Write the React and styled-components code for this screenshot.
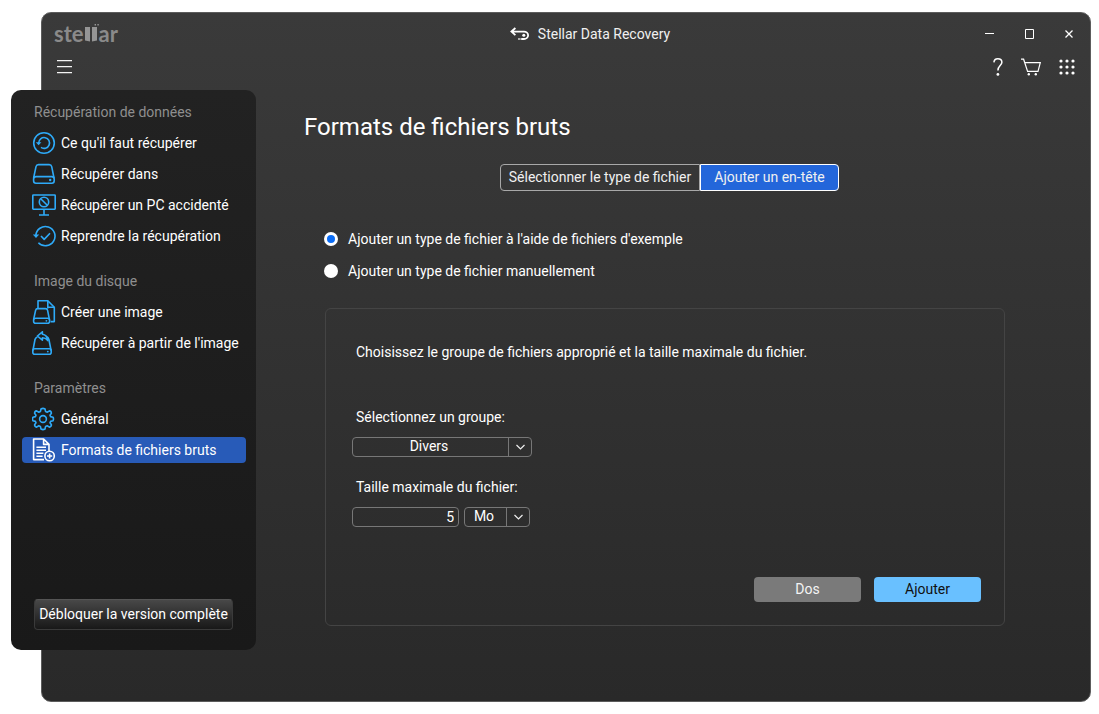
import React, { useState } from "react";
import styled, { createGlobalStyle, css } from "styled-components";

const GlobalStyle = createGlobalStyle`
  *, *::before, *::after {
    box-sizing: border-box;
  }

  body {
    margin: 0;
    background: #ffffff;
    color: #ffffff;
    font-family: Roboto, "Liberation Sans", sans-serif;
    font-size: 14px;
    line-height: 20px;
  }

  button, input, select {
    font: inherit;
    color: inherit;
  }
`;

/* icons */

const RecoverIcon = () => (
  <Icon viewBox="0 0 24 24">
    <circle cx="12" cy="12" r="10.3" />
    <path d="M6.7 12A5.4 5.4 0 1 1 9 16.4" />
    <path className="solid" d="M3.8 11.2H9.4L6.6 14.2z" />
  </Icon>
);

const DriveIcon = () => (
  <Icon viewBox="0 0 24 24">
    <path d="M1.6 16 4 4.6Q4.5 2.6 6.5 2.6H17.2Q19.2 2.6 19.7 4.6L22 16" />
    <rect x="1.6" y="14.6" width="20.6" height="6.6" rx="2.4" />
    <circle className="solid" cx="18.2" cy="18" r="1.2" />
  </Icon>
);

const CrashedPcIcon = () => (
  <Icon viewBox="0 0 24 24">
    <rect x="0.8" y="2" width="22.4" height="14.2" rx="0.6" />
    <path d="M12 16.2V22M7 22H17" />
    <circle cx="12" cy="9" r="4.7" />
    <path d="M8.7 5.8 15.3 12.3" />
  </Icon>
);

const ResumeIcon = () => (
  <Icon viewBox="0 0 24 24">
    <path d="M3.8 11.6A9.6 9.6 0 1 1 6.4 18.7" />
    <path d="M9 12 12.2 15.4 18 9.3" />
    <path className="solid" d="M0.8 10.6H7.2L4 14z" />
  </Icon>
);

const CreateImageIcon = () => (
  <Icon viewBox="0 0 24 24">
    <path d="M6 8.5V0.8H15.8L22.3 7.2V21.6H18.6" />
    <path d="M15.8 0.8V8.5M15.8 7.2H22.3" />
    <path d="M1.6 19.5 3.6 10.4Q4 8.6 5.8 8.6H13.4Q15.2 8.6 15.6 10.4L17.4 19.5" />
    <rect x="1.6" y="18.2" width="16" height="5" rx="2" />
    <circle className="solid" cx="14.4" cy="20.8" r="0.9" />
  </Icon>
);

const FromImageIcon = () => (
  <Icon viewBox="0 0 24 24">
    <path d="M0.9 19.5 3 8.5Q3.4 6.6 5.4 6M14.4 5.6Q16.4 6 16.9 8.5L19.1 19.5" />
    <rect x="0.8" y="17.8" width="18.4" height="5.4" rx="2" />
    <circle className="solid" cx="15.8" cy="20.6" r="0.9" />
    <path d="M5.4 5 10.4 0.8V3.2Q15.2 3.8 15.8 9.6 13.6 6.8 10.4 6.8V9.2z" />
  </Icon>
);

const GearIcon = () => (
  <Icon viewBox="0 0 24 24">
    <circle cx="11" cy="12" r="3.4" />
    <path d="M9 2Q11 .8 13 2L13.6 4.6 15.2 5.2 17.4 3.9Q19.4 4.2 19.4 6.2L18 8.2 18.6 9.6 21 10.2Q22 12 21 13.8L18.6 14.4 18 15.8 19.4 17.8Q19.4 19.8 17.4 20.1L15.2 18.8 13.6 19.4 13 22Q11 23.2 9 22L8.4 19.4 6.8 18.8 4.6 20.1Q2.6 19.8 2.6 17.8L4 15.8 3.4 14.4 1 13.8Q0 12 1 10.2L3.4 9.6 4 8.2 2.6 6.2Q2.6 4.2 4.6 3.9L6.8 5.2 8.4 4.6z" />
  </Icon>
);

const RawFormatsIcon = () => (
  <Icon viewBox="0 0 24 24">
    <path d="M12 21.6H1.6V1H11.6L17 6.4V13M11.6 1V6.4H17" />
    <path d="M4.4 9.2H14M4.4 12.2H14M4.4 15.2H11.4M4.4 18.2H10.6" />
    <circle cx="17.6" cy="18" r="4.7" />
    <path d="M17.6 15.4V20.6M15 18H20.2" />
  </Icon>
);

const MENU = [
  {
    title: "Récupération de données",
    items: [
      { label: "Ce qu'il faut récupérer", icon: RecoverIcon },
      { label: "Récupérer dans", icon: DriveIcon },
      { label: "Récupérer un PC accidenté", icon: CrashedPcIcon },
      { label: "Reprendre la récupération", icon: ResumeIcon },
    ],
  },
  {
    title: "Image du disque",
    items: [
      { label: "Créer une image", icon: CreateImageIcon },
      { label: "Récupérer à partir de l'image", icon: FromImageIcon },
    ],
  },
  {
    title: "Paramètres",
    items: [
      { label: "Général", icon: GearIcon },
      { label: "Formats de fichiers bruts", icon: RawFormatsIcon },
    ],
  },
];

const Logo = () => (
  <LogoText>
    ste
    <svg width="15" height="20" viewBox="0 0 15 20" aria-label="ll">
      <path d="M1 3H6V17.6L1 16.4z" />
      <path d="M8 3H13V16.4L8 17.6z" />
      <path d="M10.6 0H12v1.4h-1.4zM13.4 0h1.4v1.4h-1.4z" />
    </svg>
    ar
  </LogoText>
);

const TitleBar = () => (
  <TitleRow>
    <Logo />
    <AppTitle>
      <svg width="20" height="14" viewBox="0 0 20 14" fill="none" stroke="#fff" strokeWidth="1.8">
        <path d="M5.4 1 1.4 4.6 5.4 8.2M1.6 4.6H14a4 3.6 0 0 1 0 7.4h-2" />
        <circle cx="13.8" cy="8.2" r="1.5" fill="#fff" stroke="none" />
        <path d="M8.4 12H12" strokeDasharray="1.2 1" />
      </svg>
      Stellar Data Recovery
    </AppTitle>
    <WindowButtons>
      <IconButton aria-label="Réduire">
        <svg width="9" height="10" stroke="#fff">
          <path d="M0 4.5H9" />
        </svg>
      </IconButton>
      <IconButton aria-label="Agrandir">
        <svg width="9" height="10" stroke="#fff" fill="none">
          <path d="M.5.5H8.5V9.5H.5z" />
        </svg>
      </IconButton>
      <IconButton aria-label="Fermer">
        <svg width="8" height="8" stroke="#fff" strokeWidth="1.3">
          <path d="M.5.5 7.5 7.5M7.5.5.5 7.5" />
        </svg>
      </IconButton>
    </WindowButtons>
  </TitleRow>
);

const Toolbar = () => (
  <ToolRow>
    <IconButton aria-label="Menu">
      <svg width="15" height="14" stroke="#f4f4f4" strokeWidth="1.3">
        <path d="M0 .6H15M0 6.6H15M0 12.6H15" />
      </svg>
    </IconButton>
    <Tools>
      <IconButton aria-label="Aide">
        <svg width="10" height="18" viewBox="0 0 10 18" fill="none" stroke="#fff" strokeWidth="1.5">
          <path d="M.9 4.4Q1.2.8 4.8.8 8.9.8 8.9 4.3C8.9 7.4 4.9 8 4.9 12.4" />
          <circle cx="4.9" cy="16.4" r="1.4" fill="#fff" stroke="none" />
        </svg>
      </IconButton>
      <IconButton aria-label="Panier">
        <svg width="20" height="18" viewBox="0 0 20 18" fill="none" stroke="#fff" strokeWidth="1.2">
          <path d="M0 1.2H2.6L6.6 13.4H17L19.3 4.6H3.8" />
          <circle cx="7.8" cy="16.2" r="1.2" fill="#fff" stroke="none" />
          <circle cx="14.8" cy="16.2" r="1.2" fill="#fff" stroke="none" />
        </svg>
      </IconButton>
      <IconButton aria-label="Applications">
        <svg width="16" height="16" viewBox="0 0 16 16" fill="#fff">
          {[2, 8, 14].map((y) =>
            [2, 8, 14].map((x) => <circle key={`${x}-${y}`} cx={x} cy={y} r="1.6" />)
          )}
        </svg>
      </IconButton>
    </Tools>
  </ToolRow>
);

const Sidebar = ({ current, onSelect }) => (
  <SidePanel>
    {MENU.map((group) => (
      <MenuGroup key={group.title}>
        <MenuTitle>{group.title}</MenuTitle>
        {group.items.map(({ label, icon: ItemIcon }) => (
          <MenuItem key={label} $active={label === current} onClick={() => onSelect(label)}>
            <ItemIcon />
            {label}
          </MenuItem>
        ))}
      </MenuGroup>
    ))}
    <UnlockButton>Débloquer la version complète</UnlockButton>
  </SidePanel>
);

const Dropdown = ({ id, width, options, label }) => (
  <SelectBox $width={width}>
    <select id={id} aria-label={label}>
      {options.map((option) => (
        <option key={option}>{option}</option>
      ))}
    </select>
    <SelectArrow>
      <svg width="9" height="6" fill="none" stroke="#eee" strokeWidth="1.2">
        <path d="M.5 1 4.5 5 8.5 1" />
      </svg>
    </SelectArrow>
  </SelectBox>
);

const RawFormats = () => {
  const [tab, setTab] = useState("header");
  const [mode, setMode] = useState("sample");
  const [size, setSize] = useState("5");

  return (
    <Main>
      <Title>Formats de fichiers bruts</Title>

      <Tabs>
        <Tab $active={tab === "type"} onClick={() => setTab("type")}>
          Sélectionner le type de fichier
        </Tab>
        <Tab $active={tab === "header"} onClick={() => setTab("header")}>
          Ajouter un en-tête
        </Tab>
      </Tabs>

      <Choices>
        <Choice>
          <input
            type="radio"
            name="mode"
            checked={mode === "sample"}
            onChange={() => setMode("sample")}
          />
          Ajouter un type de fichier à l'aide de fichiers d'exemple
        </Choice>
        <Choice>
          <input
            type="radio"
            name="mode"
            checked={mode === "manual"}
            onChange={() => setMode("manual")}
          />
          Ajouter un type de fichier manuellement
        </Choice>
      </Choices>

      <Panel>
        <Intro>Choisissez le groupe de fichiers approprié et la taille maximale du fichier.</Intro>

        <Field>
          <label htmlFor="group">Sélectionnez un groupe:</label>
          <Controls>
            <Dropdown id="group" width={180} options={["Divers"]} />
          </Controls>
        </Field>

        <Field>
          <label htmlFor="size">Taille maximale du fichier:</label>
          <Controls>
            <SizeInput id="size" value={size} onChange={(e) => setSize(e.target.value)} />
            <Dropdown id="unit" label="Unité" width={66} options={["Mo"]} />
          </Controls>
        </Field>

        <Actions>
          <ActionButton>Dos</ActionButton>
          <ActionButton $primary>Ajouter</ActionButton>
        </Actions>
      </Panel>
    </Main>
  );
};

const App = () => {
  const [page, setPage] = useState("Formats de fichiers bruts");

  return (
    <>
      <GlobalStyle />
      <Page>
        <Window>
          <TitleBar />
          <Toolbar />
          <Body>
            <Sidebar current={page} onSelect={setPage} />
            <RawFormats />
          </Body>
        </Window>
      </Page>
    </>
  );
};

export default App;

const Page = styled.div`
  display: flex;
  min-height: 100vh;
  padding: 12px 8px 12px 41px;
`;

const Window = styled.div`
  flex: 1;
  display: flex;
  flex-direction: column;
  min-width: 0;
  border: 1px solid #5c5c5c;
  border-radius: 10px;
  background: linear-gradient(#3a3a3a, #292929);
`;

const TitleRow = styled.header`
  display: grid;
  grid-template-columns: 1fr auto 1fr;
  align-items: center;
  height: 42px;
  padding: 0 17px 0 12px;
`;

const LogoText = styled.div`
  display: flex;
  align-items: center;
  color: #8a8a8a;
  font-family: Lato, sans-serif;
  font-size: 22px;
  font-weight: 700;

  svg {
    fill: #959595;
  }
`;

const AppTitle = styled.div`
  display: flex;
  align-items: center;
  gap: 8px;
  padding-left: 53px;
  color: #f0f0f0;
`;

const WindowButtons = styled.div`
  display: flex;
  align-items: center;
  justify-content: flex-end;
  gap: 31px;
`;

const IconButton = styled.button`
  display: flex;
  padding: 0;
  border: 0;
  background: none;
  cursor: pointer;
`;

const ToolRow = styled.nav`
  display: flex;
  align-items: center;
  justify-content: space-between;
  height: 24px;
  padding: 0 15px 0 15px;
`;

const Tools = styled.div`
  display: flex;
  align-items: center;
  gap: 18px;
`;

const Body = styled.div`
  flex: 1;
  display: flex;
`;

const SidePanel = styled.aside`
  display: flex;
  flex-direction: column;
  flex: none;
  gap: 19px;
  width: 245px;
  margin: 11px 0 51px -31px;
  padding: 9px 10px 20px 11px;
  border-radius: 10px;
  background: linear-gradient(#222222, #191919);
`;

const MenuGroup = styled.div`
  display: flex;
  flex-direction: column;
  gap: 5px;
`;

const MenuTitle = styled.div`
  padding-left: 12px;
  color: #8f8f8f;
  line-height: 26px;
`;

const MenuItem = styled.button`
  display: flex;
  align-items: center;
  gap: 5px;
  height: 26px;
  padding: 0 0 0 10px;
  border: 0;
  border-radius: 4px;
  background: ${({ $active }) => ($active ? "#285bb8" : "none")};
  color: #ffffff;
  white-space: nowrap;
  cursor: pointer;

  svg {
    stroke: ${({ $active }) => ($active ? "#ffffff" : "#2eaaf8")};
  }
`;

const Icon = styled.svg`
  flex: none;
  width: 24px;
  height: 24px;
  fill: none;
  stroke-width: 1.6;
  stroke-linejoin: round;

  .solid {
    fill: #2eaaf8;
    stroke: none;
  }
`;

const UnlockButton = styled.button`
  height: 31px;
  margin: auto 13px 0 12px;
  padding: 0 0 2px;
  border: 1px solid #3a3a3a;
  border-top-color: #555555;
  border-radius: 4px;
  background: linear-gradient(#484848, #181818);
  white-space: nowrap;
  cursor: pointer;
`;

const Main = styled.main`
  flex: 1;
  min-width: 0;
  padding: 32px 55px 32px 48px;
`;

const Title = styled.h1`
  margin: 0;
  font-size: 24px;
  font-weight: 400;
  line-height: 32px;
`;

const Tabs = styled.div`
  display: flex;
  justify-content: center;
  margin-top: 21px;
`;

const Tab = styled.button`
  min-width: 200px;
  height: 27px;
  padding: 0 0 2px;
  border: 1px solid #a8a8a8;
  border-radius: 4px 0 0 4px;
  background: none;
  color: #f0f0f0;
  cursor: pointer;

  & + & {
    min-width: 139px;
    border-radius: 0 4px 4px 0;
  }

  ${({ $active }) =>
    $active &&
    css`
      border-color: #ffffff;
      background: #2366da;
    `}
`;

const Choices = styled.div`
  display: flex;
  flex-direction: column;
  align-items: flex-start;
  gap: 12px;
  margin: 38px 0 0 20px;
`;

const Choice = styled.label`
  display: flex;
  align-items: center;
  gap: 10px;

  input {
    appearance: none;
    width: 14px;
    height: 14px;
    margin: 0;
    border-radius: 50%;
    background: #ffffff;
  }

  input:checked {
    border: 3px solid #ffffff;
    background: #0a6cf5;
  }
`;

const Panel = styled.section`
  margin: 27px 30px 0 21px;
  padding: 33px 23px 23px 26px;
  border: 1px solid #444444;
  border-radius: 6px;
`;

const Intro = styled.p`
  margin: 0 0 45px 4px;
`;

const Field = styled.div`
  margin-bottom: 20px;

  label {
    display: block;
    margin-left: 4px;
  }
`;

const Controls = styled.div`
  display: flex;
  gap: 5px;
  margin-top: 10px;
`;

const SelectBox = styled.div`
  position: relative;
  width: ${({ $width }) => $width}px;

  select {
    appearance: none;
    display: block;
    width: 100%;
    height: 20px;
    padding: 0 26px 2px 0;
    border: 1px solid #777777;
    border-radius: 4px;
    background: transparent;
    line-height: 16px;
    text-align: center;
    text-align-last: center;
  }
`;

const SelectArrow = styled.span`
  position: absolute;
  top: 1px;
  right: 1px;
  bottom: 1px;
  display: flex;
  align-items: center;
  justify-content: center;
  width: 23px;
  border-left: 1px solid #777777;
  pointer-events: none;
`;

const SizeInput = styled.input`
  width: 107px;
  height: 20px;
  padding: 0 4px;
  border: 1px solid #777777;
  border-radius: 4px;
  background: transparent;
  text-align: right;
`;

const Actions = styled.div`
  display: flex;
  justify-content: flex-end;
  gap: 13px;
  margin-top: 50px;
`;

const ActionButton = styled.button`
  width: 107px;
  height: 25px;
  padding: 0 0 2px;
  border: 0;
  border-radius: 4px;
  background: ${({ $primary }) => ($primary ? "#69c0ff" : "#7a7a7a")};
  color: ${({ $primary }) => ($primary ? "#101010" : "#f4f4f4")};
  cursor: pointer;
`;
